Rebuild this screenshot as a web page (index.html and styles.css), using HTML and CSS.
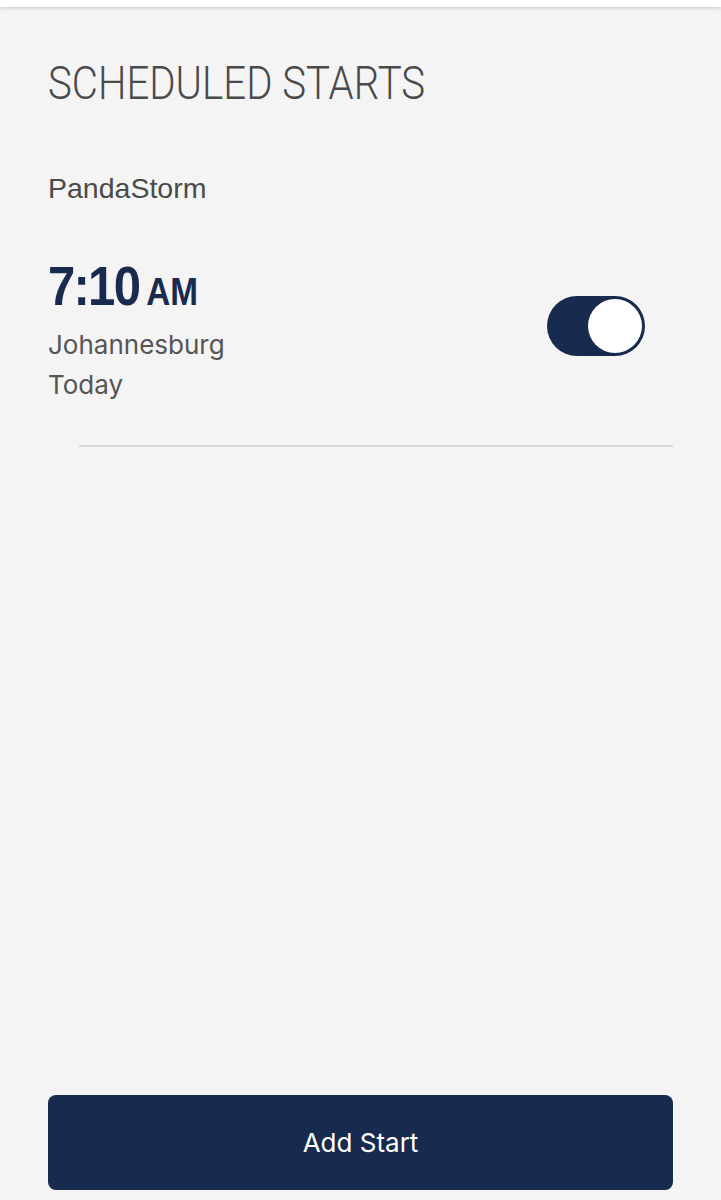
FILE: index.html
```html
<!DOCTYPE html>
<html>
<head>
<meta charset="utf-8">
<link rel="stylesheet" href="styles.css">
</head>
<body>
<div class="topbar"></div>
<main class="page">
  <h1 class="title"><span class="squeeze">SCHEDULED STARTS</span></h1>
  <div class="vehicle">PandaStorm</div>
  <div class="start-row">
    <div class="start-info">
      <div class="time"><span class="hm">7:10</span><span class="ampm">AM</span></div>
      <div class="place">Johannesburg</div>
      <div class="day">Today</div>
    </div>
    <div class="toggle on"><div class="knob"></div></div>
  </div>
  <div class="divider"></div>
  <div class="spacer"></div>
  <button class="add-btn">Add Start</button>
</main>
</body>
</html>
```
FILE: styles.css
```css
html, body {
  margin: 0;
  padding: 0;
  background: #f4f4f4;
}
body {
  width: 721px;
  height: 1200px;
  overflow: hidden;
  font-family: "Liberation Sans", Arial, sans-serif;
}
.topbar {
  height: 7px;
  background: #ffffff;
  box-shadow: 0 1px 4px rgba(0,0,0,0.18);
  position: relative;
}
.page {
  display: flex;
  flex-direction: column;
  padding: 0 48px;
  height: 1193px;
  box-sizing: border-box;
}
.title {
  margin: 49px 0 0 0;
  font-family: Roboto, "Liberation Sans", sans-serif;
  font-weight: 300;
  font-size: 46px;
  line-height: 54px;
  color: #4a4a4a;
  white-space: nowrap;
}
.squeeze {
  display: inline-block;
  transform: scaleX(0.874);
  transform-origin: left center;
}
.vehicle {
  margin-top: 61px;
  font-family: "Liberation Sans", sans-serif;
  font-size: 28.5px;
  line-height: 34px;
  color: #4a4a4a;
}
.start-row {
  display: flex;
  align-items: center;
  justify-content: space-between;
  margin-top: 56px;
}
.time {
  color: #182a4e;
  font-family: "Liberation Sans", sans-serif;
  font-weight: 700;
  line-height: 50px;
  white-space: nowrap;
  transform: scaleX(0.876);
  transform-origin: left center;
}
.hm {
  font-size: 56px;
  letter-spacing: -2px;
}
.ampm {
  font-size: 38px;
  margin-left: 8px;
}
.place, .day {
  font-family: "Inter", "Liberation Sans", sans-serif;
  font-size: 26px;
  line-height: 40px;
  color: #555555;
}
.toggle {
  width: 98px;
  height: 60px;
  border-radius: 30px;
  background: #182a4e;
  display: flex;
  align-items: center;
  justify-content: flex-end;
  padding: 0 3px;
  box-sizing: border-box;
  margin-right: 28px;
  margin-top: -14px;
}
.knob {
  width: 54px;
  height: 54px;
  border-radius: 50%;
  background: #ffffff;
}
.divider {
  margin: 40px 0 0 31px;
  height: 2px;
  background: #dadada;
}
.spacer {
  flex: 1;
}
.add-btn {
  height: 95px;
  border: none;
  border-radius: 8px;
  background: #182a4e;
  color: #ffffff;
  font-family: "Inter", "Liberation Sans", sans-serif;
  font-size: 26px;
  margin-bottom: 10px;
  cursor: pointer;
}
```
